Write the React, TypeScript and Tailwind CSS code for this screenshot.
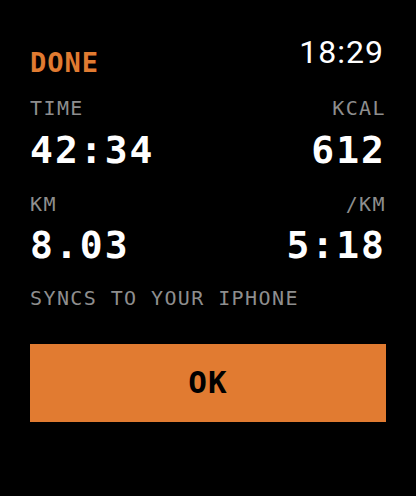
import React from 'react';

const mono = "font-['DejaVu_Sans_Mono',monospace]";

interface StatProps {
  label: string;
  value: string;
  align?: 'left' | 'right';
}

function Stat({ label, value, align = 'left' }: StatProps) {
  const side = align === 'right' ? 'items-end text-right' : 'items-start text-left';
  return (
    <div className={`flex flex-col ${side}`}>
      <span className={`${mono} text-[20px] leading-[20px] tracking-[1.4px] text-[#8e8e8e]`}>{label}</span>
      <span className={`${mono} mt-[12.5px] text-[38px] leading-[38px] font-bold tracking-[2px] text-white`}>
        {value}
      </span>
    </div>
  );
}

export default function App() {
  return (
    <div className="w-[416px] h-[496px] bg-black px-[30px] pt-[36px] flex flex-col">
      {/* Header */}
      <div className="flex items-start justify-between">
        <span className={`${mono} mt-[13px] text-[27px] leading-[27px] font-bold tracking-[1px] text-[#e17b31]`}>
          DONE
        </span>
        <span className="font-['Roboto',sans-serif] text-[32px] leading-[32px] tracking-[1px] text-white mr-[2px]">
          18:29
        </span>
      </div>

      <div className="mt-[22px] flex justify-between">
        <Stat label="TIME" value="42:34" />
        <Stat label="KCAL" value="612" align="right" />
      </div>

      <div className="mt-[25px] flex justify-between">
        <Stat label="KM" value="8.03" />
        <Stat label="/KM" value="5:18" align="right" />
      </div>

      <p className={`${mono} mt-[23.5px] text-[20px] leading-[20px] tracking-[1.4px] text-[#8e8e8e]`}>
        SYNCS TO YOUR IPHONE
      </p>

      <button className="mt-[36px] h-[78px] w-full bg-[#e17b31] flex items-center justify-center">
        <span className={`${mono} text-[31px] leading-[31px] font-bold tracking-[1px] text-black`}>OK</span>
      </button>
    </div>
  );
}
